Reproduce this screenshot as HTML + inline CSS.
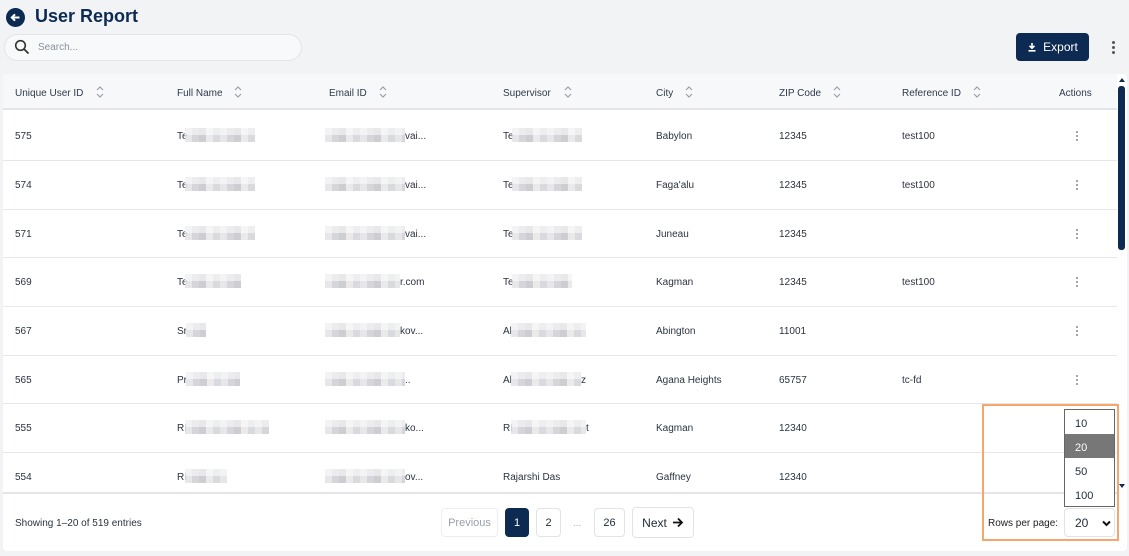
<!DOCTYPE html>
<html><head><meta charset="utf-8"><style>
*{box-sizing:border-box;margin:0;padding:0}
body{width:1129px;height:556px;background:#f2f3f5;font-family:"Liberation Sans",sans-serif;position:relative;overflow:hidden;color:#1f2937}
.a{position:absolute}
.t{font-size:10px;color:#2a3340;white-space:nowrap;margin-top:1px}
.h{font-size:10px;color:#2f3a4a;white-space:nowrap;margin-top:1px}
.blur{position:absolute;height:14px;background:repeating-linear-gradient(90deg,#e3e3e6 0 7px,#cfcfd4 7px 14px,#c5c5cb 14px 21px,#e8e6e6 21px 28px,#d2d4d9 28px 35px);opacity:.85}
.blur:before{content:"";position:absolute;left:0;right:0;top:0;height:7px;background:rgba(255,255,255,.55)}
.sort{position:absolute;width:8px;height:14px}
.btn{position:absolute;border:1px solid #e1e3e7;border-radius:4px;background:#fff;font-size:11px;display:flex;align-items:center;justify-content:center;height:29px;top:508px}
.dot{position:absolute;width:2px;height:2px;background:#888;border-radius:1px}
</style></head><body>
<svg class="a" style="left:6px;top:8px" width="19" height="19" viewBox="0 0 19 19"><circle cx="9.5" cy="9.5" r="9.5" fill="#0d2a52"/><path d="M13.5 9.5H6M9 6.3L5.8 9.5 9 12.7" stroke="#fff" stroke-width="2" fill="none"/></svg>
<div class="a" style="left:35px;top:6px;font-size:18px;font-weight:bold;color:#0d2a52">User Report</div>
<div class="a" style="left:4px;top:34px;width:298px;height:27px;border:1px solid #e2e4e8;border-radius:14px;background:#f8f9fa"></div>
<svg class="a" style="left:14px;top:39px" width="16" height="16" viewBox="0 0 16 16"><circle cx="6.5" cy="6.5" r="4.8" stroke="#333" stroke-width="1.6" fill="none"/><path d="M10 10l4.5 4.5" stroke="#333" stroke-width="1.8"/></svg>
<div class="a" style="left:38px;top:42px;font-size:10px;color:#8a929c">Search...</div>
<div class="a" style="left:1016px;top:33px;width:73px;height:28px;background:#0d2a52;border-radius:4px;color:#fff;font-size:12px;display:flex;align-items:center;justify-content:center;gap:6px"><svg width="10" height="10" viewBox="0 0 10 10"><path d="M5 1v5M2.5 3.8L5 6.3 7.5 3.8M1.5 8.8h7" stroke="#fff" stroke-width="1.6" fill="none"/></svg>Export</div>
<div class="a" style="left:1112px;top:41px;width:3px;height:3px;background:#555;border-radius:2px"></div>
<div class="a" style="left:1112px;top:46px;width:3px;height:3px;background:#555;border-radius:2px"></div>
<div class="a" style="left:1112px;top:51px;width:3px;height:3px;background:#555;border-radius:2px"></div>

<div class="a" style="left:3px;top:74px;width:1124px;height:477px;background:#fff;border-radius:4px"></div>
<div class="a" style="left:3px;top:74px;width:1114px;height:36px;background:#f7f8fa;border-bottom:2px solid #e3e5ea"></div>
<div class="a" style="left:1118px;top:86px;width:7px;height:164px;background:#0d2a52;border-radius:3px"></div>
<div class="a" style="left:1119px;top:78px;border:3px solid transparent;border-bottom:4px solid #0d2a52;border-top:0"></div>
<div class="a" style="left:1119px;top:484px;border:3px solid transparent;border-top:4px solid #0d2a52;border-bottom:0"></div>

<div class="h a" style="left:15px;top:87px">Unique User ID</div>
<div class="h a" style="left:177px;top:87px">Full Name</div>
<div class="h a" style="left:329px;top:87px">Email ID</div>
<div class="h a" style="left:503px;top:87px">Supervisor</div>
<div class="h a" style="left:656px;top:87px">City</div>
<div class="h a" style="left:779px;top:87px">ZIP Code</div>
<div class="h a" style="left:902px;top:87px">Reference ID</div>
<div class="h a" style="left:1059px;top:87px">Actions</div>
<svg class="sort" style="left:96px;top:85px" viewBox="0 0 8 14"><path d="M1 5l3-3 3 3M1 9l3 3 3-3" stroke="#9aa1ab" stroke-width="1.2" fill="none"/></svg>
<svg class="sort" style="left:234px;top:85px" viewBox="0 0 8 14"><path d="M1 5l3-3 3 3M1 9l3 3 3-3" stroke="#9aa1ab" stroke-width="1.2" fill="none"/></svg>
<svg class="sort" style="left:379px;top:85px" viewBox="0 0 8 14"><path d="M1 5l3-3 3 3M1 9l3 3 3-3" stroke="#9aa1ab" stroke-width="1.2" fill="none"/></svg>
<svg class="sort" style="left:564px;top:85px" viewBox="0 0 8 14"><path d="M1 5l3-3 3 3M1 9l3 3 3-3" stroke="#9aa1ab" stroke-width="1.2" fill="none"/></svg>
<svg class="sort" style="left:685px;top:85px" viewBox="0 0 8 14"><path d="M1 5l3-3 3 3M1 9l3 3 3-3" stroke="#9aa1ab" stroke-width="1.2" fill="none"/></svg>
<svg class="sort" style="left:833px;top:85px" viewBox="0 0 8 14"><path d="M1 5l3-3 3 3M1 9l3 3 3-3" stroke="#9aa1ab" stroke-width="1.2" fill="none"/></svg>
<svg class="sort" style="left:973px;top:85px" viewBox="0 0 8 14"><path d="M1 5l3-3 3 3M1 9l3 3 3-3" stroke="#9aa1ab" stroke-width="1.2" fill="none"/></svg>

<div class="a" style="left:3px;top:160px;width:1114px;height:1px;background:#e6e7ea"></div>
<div class="a" style="left:3px;top:209px;width:1114px;height:1px;background:#e6e7ea"></div>
<div class="a" style="left:3px;top:257px;width:1114px;height:1px;background:#e6e7ea"></div>
<div class="a" style="left:3px;top:306px;width:1114px;height:1px;background:#e6e7ea"></div>
<div class="a" style="left:3px;top:355px;width:1114px;height:1px;background:#e6e7ea"></div>
<div class="a" style="left:3px;top:403px;width:1114px;height:1px;background:#e6e7ea"></div>
<div class="a" style="left:3px;top:452px;width:1114px;height:1px;background:#e6e7ea"></div>
<div class="a" style="left:3px;top:492px;width:1114px;height:2px;background:#e3e5ea"></div>

<div class="t a" style="left:15px;top:130px">575</div><div class="t a" style="left:177px;top:130px">Te</div><div class="blur" style="left:185px;top:128px;width:70px"></div>
<div class="blur" style="left:325px;top:128px;width:80px"></div><div class="t a" style="left:405px;top:130px">vai...</div>
<div class="t a" style="left:503px;top:130px">Te</div><div class="blur" style="left:512px;top:128px;width:70px"></div>
<div class="t a" style="left:656px;top:130px">Babylon</div><div class="t a" style="left:779px;top:130px">12345</div><div class="t a" style="left:902px;top:130px">test100</div>

<div class="t a" style="left:15px;top:179px">574</div><div class="t a" style="left:177px;top:179px">Te</div><div class="blur" style="left:185px;top:177px;width:70px"></div>
<div class="blur" style="left:325px;top:177px;width:80px"></div><div class="t a" style="left:405px;top:179px">vai...</div>
<div class="t a" style="left:503px;top:179px">Te</div><div class="blur" style="left:512px;top:177px;width:70px"></div>
<div class="t a" style="left:656px;top:179px">Faga'alu</div><div class="t a" style="left:779px;top:179px">12345</div><div class="t a" style="left:902px;top:179px">test100</div>

<div class="t a" style="left:15px;top:228px">571</div><div class="t a" style="left:177px;top:228px">Te</div><div class="blur" style="left:185px;top:226px;width:70px"></div>
<div class="blur" style="left:325px;top:226px;width:80px"></div><div class="t a" style="left:405px;top:228px">vai...</div>
<div class="t a" style="left:503px;top:228px">Te</div><div class="blur" style="left:512px;top:226px;width:70px"></div>
<div class="t a" style="left:656px;top:228px">Juneau</div><div class="t a" style="left:779px;top:228px">12345</div>

<div class="t a" style="left:15px;top:276px">569</div><div class="t a" style="left:177px;top:276px">Te</div><div class="blur" style="left:185px;top:274px;width:56px"></div>
<div class="blur" style="left:325px;top:274px;width:75px"></div><div class="t a" style="left:400px;top:276px">r.com</div>
<div class="t a" style="left:503px;top:276px">Te</div><div class="blur" style="left:512px;top:274px;width:60px"></div>
<div class="t a" style="left:656px;top:276px">Kagman</div><div class="t a" style="left:779px;top:276px">12345</div><div class="t a" style="left:902px;top:276px">test100</div>

<div class="t a" style="left:15px;top:325px">567</div><div class="t a" style="left:177px;top:325px">Sr</div><div class="blur" style="left:186px;top:323px;width:20px"></div>
<div class="blur" style="left:325px;top:323px;width:75px"></div><div class="t a" style="left:400px;top:325px">kov...</div>
<div class="t a" style="left:503px;top:325px">Al</div><div class="blur" style="left:511px;top:323px;width:75px"></div>
<div class="t a" style="left:656px;top:325px">Abington</div><div class="t a" style="left:779px;top:325px">11001</div>

<div class="t a" style="left:15px;top:374px">565</div><div class="t a" style="left:177px;top:374px">Pr</div><div class="blur" style="left:186px;top:372px;width:54px"></div>
<div class="blur" style="left:325px;top:372px;width:80px"></div><div class="t a" style="left:405px;top:374px">..</div>
<div class="t a" style="left:503px;top:374px">Al</div><div class="blur" style="left:511px;top:372px;width:70px"></div><div class="t a" style="left:581px;top:374px">z</div>
<div class="t a" style="left:656px;top:374px">Agana Heights</div><div class="t a" style="left:779px;top:374px">65757</div><div class="t a" style="left:902px;top:374px">tc-fd</div>

<div class="t a" style="left:15px;top:422px">555</div><div class="t a" style="left:177px;top:422px">RI</div><div class="blur" style="left:185px;top:420px;width:84px"></div>
<div class="blur" style="left:325px;top:420px;width:80px"></div><div class="t a" style="left:405px;top:422px">ko...</div>
<div class="t a" style="left:503px;top:422px">RI</div><div class="blur" style="left:511px;top:420px;width:75px"></div><div class="t a" style="left:586px;top:422px">t</div>
<div class="t a" style="left:656px;top:422px">Kagman</div><div class="t a" style="left:779px;top:422px">12340</div>

<div class="t a" style="left:15px;top:471px">554</div><div class="t a" style="left:177px;top:471px">RI</div><div class="blur" style="left:185px;top:469px;width:42px"></div>
<div class="blur" style="left:325px;top:469px;width:80px"></div><div class="t a" style="left:405px;top:471px">ov...</div>
<div class="t a" style="left:503px;top:471px">Rajarshi Das</div>
<div class="t a" style="left:656px;top:471px">Gaffney</div><div class="t a" style="left:779px;top:471px">12340</div>

<div class="dot" style="left:1076px;top:131px"></div><div class="dot" style="left:1076px;top:135px"></div><div class="dot" style="left:1076px;top:139px"></div>
<div class="dot" style="left:1076px;top:180px"></div><div class="dot" style="left:1076px;top:184px"></div><div class="dot" style="left:1076px;top:188px"></div>
<div class="dot" style="left:1076px;top:229px"></div><div class="dot" style="left:1076px;top:233px"></div><div class="dot" style="left:1076px;top:237px"></div>
<div class="dot" style="left:1076px;top:277px"></div><div class="dot" style="left:1076px;top:281px"></div><div class="dot" style="left:1076px;top:285px"></div>
<div class="dot" style="left:1076px;top:326px"></div><div class="dot" style="left:1076px;top:330px"></div><div class="dot" style="left:1076px;top:334px"></div>
<div class="dot" style="left:1076px;top:375px"></div><div class="dot" style="left:1076px;top:379px"></div><div class="dot" style="left:1076px;top:383px"></div>

<div class="t a" style="left:15px;top:517px">Showing 1–20 of 519 entries</div>
<div class="btn" style="left:441px;width:57px;color:#9aa1ab;border-color:#eceef1">Previous</div>
<div class="btn" style="left:505px;width:24px;background:#0d2a52;color:#fff;border-color:#0d2a52">1</div>
<div class="btn" style="left:536px;width:25px">2</div>
<div class="t a" style="left:573px;top:517px;color:#aaa">...</div>
<div class="btn" style="left:594px;width:31px">26</div>
<div class="btn" style="left:632px;width:62px;height:31px;top:507px;font-size:12px;gap:5px">Next <svg width="12" height="11" viewBox="0 0 12 11"><path d="M1 5.5h9M6 1.5l4 4-4 4" stroke="#111" stroke-width="1.8" fill="none"/></svg></div>
<div class="t a" style="left:988px;top:517px;color:#222">Rows per page:</div>
<div class="btn" style="left:1064px;width:51px;justify-content:flex-start;padding-left:10px;font-size:12px">20<svg style="position:absolute;left:37px;top:11px" width="9" height="7" viewBox="0 0 9 7"><path d="M1 1.5l3.5 3.5 3.5-3.5" stroke="#111" stroke-width="2" fill="none"/></svg></div>
<div class="a" style="left:1064px;top:409px;width:51px;height:98px;border:1px solid #666;background:#fff;font-size:11px">
<div style="height:24px;padding:8px 0 0 10px">10</div>
<div style="height:24px;padding:8px 0 0 10px;background:#777;color:#fff">20</div>
<div style="height:24px;padding:8px 0 0 10px">50</div>
<div style="height:24px;padding:8px 0 0 10px">100</div>
</div>
<div class="a" style="left:982px;top:404px;width:137px;height:137px;border:2px solid #f7a56a"></div>
</body></html>
